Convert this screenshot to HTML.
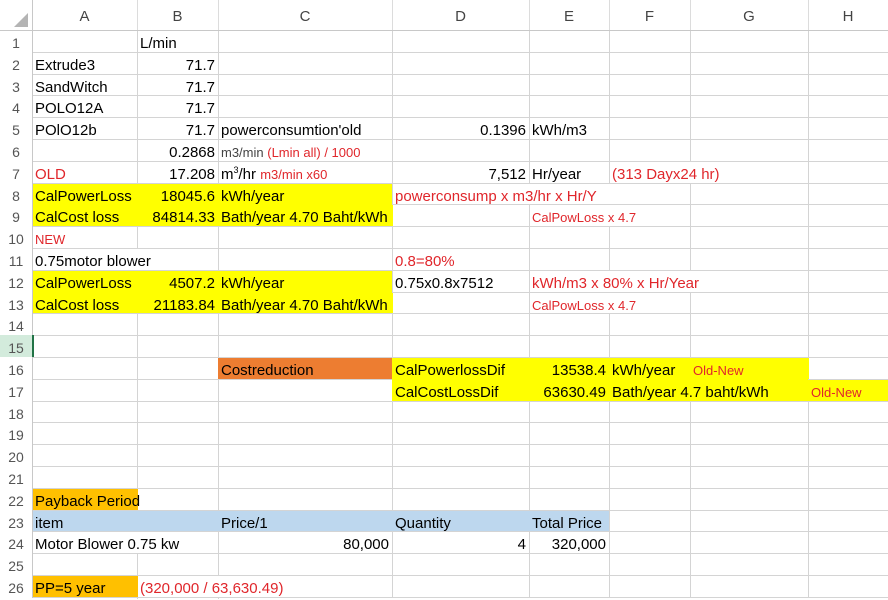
<!DOCTYPE html>
<html><head><meta charset="utf-8"><style>
*{margin:0;padding:0;box-sizing:border-box}
body{width:888px;height:598px;overflow:hidden;background:#fff;font-family:"Liberation Sans",Arial,sans-serif;font-size:15px;color:#000;position:relative}
.v{position:absolute;top:0;width:1px;height:598px;background:#d4d4d4}
.h{position:absolute;left:0;width:888px;height:1px;background:#d4d4d4}
.f{position:absolute}
.t{position:absolute;white-space:nowrap;height:22px;line-height:22px;padding:0 3px;margin-top:2px}
.r{text-align:right}
.red{color:#e0262b}
.s{font-size:13px}
.hd{position:absolute;top:0;height:31px;line-height:34px;text-align:center;color:#444;font-size:15px}
.rn{position:absolute;left:0;width:32px;height:22px;line-height:24px;text-align:center;color:#555;font-size:14px}
sup{line-height:0;font-size:9px;vertical-align:6px}
</style></head><body>
<div class="f" style="left:32px;top:183px;width:361px;height:43px;background:#ffff00"></div>
<div class="f" style="left:32px;top:270px;width:361px;height:44px;background:#ffff00"></div>
<div class="f" style="left:218px;top:357px;width:175px;height:22px;background:#ed7d31"></div>
<div class="f" style="left:392px;top:357px;width:417px;height:22px;background:#ffff00"></div>
<div class="f" style="left:392px;top:379px;width:496px;height:22px;background:#ffff00"></div>
<div class="f" style="left:32px;top:488px;width:106px;height:22px;background:#ffc000"></div>
<div class="f" style="left:32px;top:510px;width:578px;height:22px;background:#bdd7ee"></div>
<div class="f" style="left:32px;top:575px;width:106px;height:22px;background:#ffc000"></div>

<div id="g">
<div class="h" style="top:30px"></div><div class="h" style="top:52px"></div><div class="h" style="top:74px"></div><div class="h" style="top:95px"></div><div class="h" style="top:117px"></div><div class="h" style="top:139px"></div><div class="h" style="top:161px"></div><div class="h" style="top:183px"></div><div class="h" style="top:204px;left:392px;width:496px"></div><div class="h" style="top:226px"></div><div class="h" style="top:248px"></div><div class="h" style="top:270px"></div><div class="h" style="top:292px;left:392px;width:496px"></div><div class="h" style="top:313px"></div><div class="h" style="top:335px"></div><div class="h" style="top:357px"></div><div class="h" style="top:379px;left:0;width:392px"></div><div class="h" style="top:379px;left:808px;width:80px"></div><div class="h" style="top:401px"></div><div class="h" style="top:422px"></div><div class="h" style="top:444px"></div><div class="h" style="top:466px"></div><div class="h" style="top:488px"></div><div class="h" style="top:510px"></div><div class="h" style="top:531px"></div><div class="h" style="top:553px"></div><div class="h" style="top:575px"></div><div class="h" style="top:597px"></div>
<div class="v" style="left:32px"></div>
<div class="v" style="left:137px;height:183px"></div><div class="v" style="left:137px;top:226px;height:22px"></div><div class="v" style="left:137px;top:314px;height:174px"></div><div class="v" style="left:137px;top:553px;height:22px"></div><div class="v" style="left:137px;top:597px;height:2px"></div>
<div class="v" style="left:218px;height:183px"></div><div class="v" style="left:218px;top:226px;height:44px"></div><div class="v" style="left:218px;top:314px;height:43px"></div><div class="v" style="left:218px;top:379px;height:131px"></div><div class="v" style="left:218px;top:531px;height:44px"></div><div class="v" style="left:218px;top:597px;height:2px"></div>
<div class="v" style="left:392px;height:204px"></div><div class="v" style="left:392px;top:226px;height:66px"></div><div class="v" style="left:392px;top:314px;height:43px"></div><div class="v" style="left:392px;top:401px;height:109px"></div><div class="v" style="left:392px;top:531px;height:67px"></div>
<div class="v" style="left:529px;height:183px"></div><div class="v" style="left:529px;top:204px;height:153px"></div><div class="v" style="left:529px;top:401px;height:109px"></div><div class="v" style="left:529px;top:531px;height:67px"></div>
<div class="v" style="left:609px;height:183px"></div><div class="v" style="left:609px;top:226px;height:44px"></div><div class="v" style="left:609px;top:314px;height:43px"></div><div class="v" style="left:609px;top:401px;height:197px"></div>
<div class="v" style="left:690px;height:161px"></div><div class="v" style="left:690px;top:183px;height:87px"></div><div class="v" style="left:690px;top:292px;height:65px"></div><div class="v" style="left:690px;top:401px;height:197px"></div>
<div class="v" style="left:808px;height:357px"></div><div class="v" style="left:808px;top:401px;height:197px"></div>
</div>

<div class="f" style="left:0;top:0;width:888px;height:30px;background:#fff"></div>
<div class="h" style="top:30px;background:#c8c8c8"></div>
<div class="f" style="left:0;top:31px;width:32px;height:567px;background:#fff"></div>
<div class="v" style="left:32px;background:#c8c8c8"></div>
<svg class="f" style="left:14px;top:13px" width="15" height="15"><polygon points="14,0 14,14 0,14" fill="#b4b4b4"/></svg>
<div class="f" style="left:0;top:335px;width:32px;height:22px;background:#d3ebdc"></div>
<div class="f" style="left:32px;top:335px;width:2px;height:22px;background:#217346"></div>
<div class="v" style="left:137px;height:30px;background:#dcdcdc"></div><div class="v" style="left:218px;height:30px;background:#dcdcdc"></div><div class="v" style="left:392px;height:30px;background:#dcdcdc"></div><div class="v" style="left:529px;height:30px;background:#dcdcdc"></div><div class="v" style="left:609px;height:30px;background:#dcdcdc"></div><div class="v" style="left:690px;height:30px;background:#dcdcdc"></div><div class="v" style="left:808px;height:30px;background:#dcdcdc"></div>
<div class="hd" style="left:32px;width:105px">A</div><div class="hd" style="left:137px;width:81px">B</div><div class="hd" style="left:218px;width:174px">C</div><div class="hd" style="left:392px;width:137px">D</div><div class="hd" style="left:529px;width:80px">E</div><div class="hd" style="left:609px;width:81px">F</div><div class="hd" style="left:690px;width:118px">G</div><div class="hd" style="left:808px;width:80px">H</div>
<div class="rn" style="top:31px">1</div><div class="rn" style="top:53px">2</div><div class="rn" style="top:75px">3</div><div class="rn" style="top:96px">4</div><div class="rn" style="top:118px">5</div><div class="rn" style="top:140px">6</div><div class="rn" style="top:162px">7</div><div class="rn" style="top:184px">8</div><div class="rn" style="top:205px">9</div><div class="rn" style="top:227px">10</div><div class="rn" style="top:249px">11</div><div class="rn" style="top:271px">12</div><div class="rn" style="top:293px">13</div><div class="rn" style="top:314px">14</div><div class="rn" style="top:336px">15</div><div class="rn" style="top:358px">16</div><div class="rn" style="top:380px">17</div><div class="rn" style="top:402px">18</div><div class="rn" style="top:423px">19</div><div class="rn" style="top:445px">20</div><div class="rn" style="top:467px">21</div><div class="rn" style="top:489px">22</div><div class="rn" style="top:511px">23</div><div class="rn" style="top:532px">24</div><div class="rn" style="top:554px">25</div><div class="rn" style="top:576px">26</div>

<div class="t" style="left:137px;top:31px">L/min</div>
<div class="t" style="left:32px;top:53px">Extrude3</div><div class="t r" style="left:137px;width:81px;top:53px">71.7</div>
<div class="t" style="left:32px;top:75px">SandWitch</div><div class="t r" style="left:137px;width:81px;top:75px">71.7</div>
<div class="t" style="left:32px;top:96px">POLO12A</div><div class="t r" style="left:137px;width:81px;top:96px">71.7</div>
<div class="t" style="left:32px;top:118px">POlO12b</div><div class="t r" style="left:137px;width:81px;top:118px">71.7</div><div class="t" style="left:218px;top:118px">powerconsumtion'old</div><div class="t r" style="left:392px;width:137px;top:118px">0.1396</div><div class="t" style="left:529px;top:118px">kWh/m3</div>
<div class="t r" style="left:137px;width:81px;top:140px">0.2868</div><div class="t s" style="left:218px;top:140px"><span style="color:#444">m3/min</span> <span class="red">(Lmin all) / 1000</span></div>
<div class="t red" style="left:32px;top:162px">OLD</div><div class="t r" style="left:137px;width:81px;top:162px">17.208</div><div class="t" style="left:218px;top:162px">m<sup>3</sup>/hr <span class="red s">m3/min x60</span></div><div class="t r" style="left:392px;width:137px;top:162px">7,512</div><div class="t" style="left:529px;top:162px">Hr/year</div><div class="t red" style="left:609px;top:162px">(313 Dayx24 hr)</div>
<div class="t" style="left:32px;top:184px">CalPowerLoss</div><div class="t r" style="left:137px;width:81px;top:184px">18045.6</div><div class="t" style="left:218px;top:184px">kWh/year</div><div class="t red" style="left:392px;top:184px">powerconsump x m3/hr x Hr/Y</div>
<div class="t" style="left:32px;top:205px">CalCost loss</div><div class="t r" style="left:137px;width:81px;top:205px">84814.33</div><div class="t" style="left:218px;top:205px">Bath/year 4.70 Baht/kWh</div><div class="t red s" style="left:529px;top:205px">CalPowLoss x 4.7</div>
<div class="t red s" style="left:32px;top:227px">NEW</div>
<div class="t" style="left:32px;top:249px">0.75motor blower</div><div class="t red" style="left:392px;top:249px">0.8=80%</div>
<div class="t" style="left:32px;top:271px">CalPowerLoss</div><div class="t r" style="left:137px;width:81px;top:271px">4507.2</div><div class="t" style="left:218px;top:271px">kWh/year</div><div class="t" style="left:392px;top:271px">0.75x0.8x7512</div><div class="t red" style="left:529px;top:271px">kWh/m3 x 80% x Hr/Year</div>
<div class="t" style="left:32px;top:293px">CalCost loss</div><div class="t r" style="left:137px;width:81px;top:293px">21183.84</div><div class="t" style="left:218px;top:293px">Bath/year 4.70 Baht/kWh</div><div class="t red s" style="left:529px;top:293px">CalPowLoss x 4.7</div>
<div class="t" style="left:218px;top:358px">Costreduction</div><div class="t" style="left:392px;top:358px">CalPowerlossDif</div><div class="t r" style="left:529px;width:80px;top:358px">13538.4</div><div class="t" style="left:609px;top:358px">kWh/year</div><div class="t red s" style="left:690px;top:358px">Old-New</div>
<div class="t" style="left:392px;top:380px">CalCostLossDif</div><div class="t r" style="left:499px;width:110px;top:380px">63630.49</div><div class="t" style="left:609px;top:380px">Bath/year 4.7 baht/kWh</div><div class="t red s" style="left:808px;top:380px">Old-New</div>
<div class="t" style="left:32px;top:489px">Payback Period</div>
<div class="t" style="left:32px;top:511px">item</div><div class="t" style="left:218px;top:511px">Price/1</div><div class="t" style="left:392px;top:511px">Quantity</div><div class="t" style="left:529px;top:511px">Total Price</div>
<div class="t" style="left:32px;top:532px">Motor Blower 0.75 kw</div><div class="t r" style="left:218px;width:174px;top:532px">80,000</div><div class="t r" style="left:392px;width:137px;top:532px">4</div><div class="t r" style="left:529px;width:80px;top:532px">320,000</div>
<div class="t" style="left:32px;top:576px">PP=5 year</div><div class="t red" style="left:137px;top:576px">(320,000 / 63,630.49)</div>
</body></html>
